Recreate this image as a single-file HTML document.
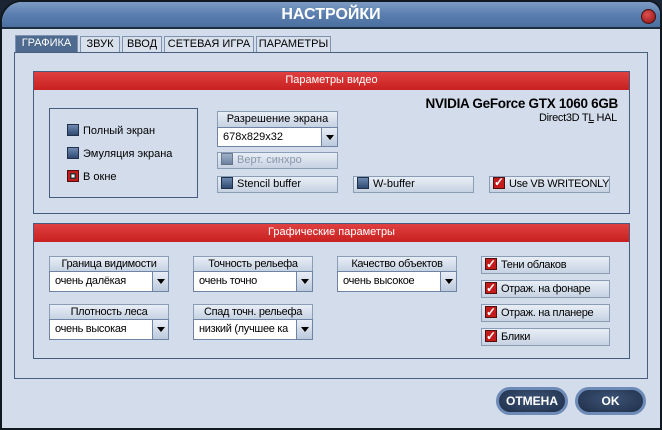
<!DOCTYPE html><html><head><meta charset="utf-8"><style>
*{margin:0;padding:0;box-sizing:border-box}
body{width:662px;height:430px;overflow:hidden;background:#1a2433;font-family:"Liberation Sans",sans-serif;font-size:11px;color:#000}
.a{position:absolute}
#win{left:0;top:0;width:662px;height:430px;background:#d3dceb;border:2px solid #101820;border-radius:22px 14px 0 0;overflow:hidden}
#tb{left:0;top:0;width:662px;height:27px;background:linear-gradient(#7d9cc4,#5a7eaf 50%,#4b6f9f);border-bottom:2px solid #1d2c40}
#title{left:0;top:4px;width:658px;text-align:center;color:#fff;font-weight:bold;font-size:16px}
.tab{top:36px;height:17px;background:#d8e0ec;border:1px solid #7f93b0;border-bottom:none;font-size:11px;text-align:center;line-height:15px}
.tab.on{background:#4e6a8e;color:#fff;top:35px;height:18px}
.panel{border:1px solid #4a5f80}
.grp{border:1px solid #465c7f;background:#d3dceb}
.hdr{left:0;top:0;right:0;height:18px;background:linear-gradient(#e04040,#c82020);color:#fff;text-align:center;line-height:17px;font-size:11px}
.btn{background:linear-gradient(#e8eef6,#c6d2e2);border:1px solid #8a9cb6;font-size:11px;line-height:15px;white-space:nowrap;overflow:hidden}
.combo{background:#fff;border:1px solid #6f84a4;line-height:18px;padding-left:5px;font-size:11px;white-space:nowrap;overflow:hidden}
.arr{position:absolute;right:0;top:0;width:16px;height:100%;background:linear-gradient(#e8eef6,#bccadd);border-left:1px solid #6f84a4}
.arr:after{content:"";position:absolute;left:4px;top:7px;border:4px solid transparent;border-top:5px solid #000}
.cb{display:inline-block;width:12px;height:12px;background:linear-gradient(#6e8ab0,#2f4a72);border:1px solid #203048;vertical-align:-2px;margin:0 4px 0 3px}
.ck{background:#c41c1c;position:relative;border-color:#501010}
.ck:after{content:"✓";position:absolute;left:0;top:-3px;color:#fff;font-size:12px;font-weight:bold}
.rb{background:#c41c1c;position:relative;border-color:#501010}
.rb:after{content:"";position:absolute;left:2px;top:2px;width:6px;height:6px;background:#fff;box-shadow:inset 0 0 0 1.5px #333}
.ob{border-radius:14px;background:radial-gradient(ellipse at 50% 40%,#3d5476,#1e2e48);border:3px solid #6d8bb6;color:#fff;font-weight:bold;font-size:12px;text-align:center;line-height:22px}
.n{letter-spacing:-0.3px}
</style></head><body>
<div id="win" class="a">
<div id="tb" class="a"><div id="title" class="a">НАСТРОЙКИ</div>
<div class="a" style="left:639px;top:7px;width:15px;height:15px;border-radius:50%;background:radial-gradient(circle at 40% 35%,#e05050,#8a1010);border:1px solid #401010"></div></div>
</div>
<div class="a tab on" style="left:15px;width:63px">ГРАФИКА</div>
<div class="a tab" style="left:80px;width:40px">ЗВУК</div>
<div class="a tab" style="left:122px;width:40px">ВВОД</div>
<div class="a tab" style="left:164px;width:90px">СЕТЕВАЯ ИГРА</div>
<div class="a tab" style="left:256px;width:75px">ПАРАМЕТРЫ</div>
<div class="a panel" style="left:14px;top:52px;width:634px;height:327px"></div>

<div class="a grp" style="left:33px;top:71px;width:597px;height:143px">
<div class="a hdr">Параметры видео</div></div>
<div class="a" style="left:49px;top:108px;width:149px;height:90px;border:1px solid #465c7f"></div>
<div class="a" style="left:64px;top:124px"><span class="cb"></span>Полный экран</div>
<div class="a" style="left:64px;top:147px"><span class="cb"></span>Эмуляция экрана</div>
<div class="a" style="left:64px;top:170px"><span class="cb rb"></span>В окне</div>
<div class="a btn" style="left:217px;top:111px;width:121px;height:17px;text-align:center">Разрешение экрана</div>
<div class="a combo" style="left:217px;top:127px;width:121px;height:20px">678x829x32<span class="arr"></span></div>
<div class="a btn" style="left:217px;top:152px;width:121px;height:17px;color:#8a96a8"><span class="cb" style="opacity:.6"></span>Верт. синхро</div>
<div class="a btn" style="left:217px;top:176px;width:121px;height:17px"><span class="cb"></span>Stencil buffer</div>
<div class="a btn" style="left:353px;top:176px;width:121px;height:17px"><span class="cb"></span>W-buffer</div>
<div class="a btn n" style="left:489px;top:176px;width:121px;height:17px"><span class="cb ck"></span>Use VB WRITEONLY</div>
<div class="a n" style="right:44px;top:96px;font-weight:bold;font-size:13.5px">NVIDIA GeForce GTX 1060 6GB</div>
<div class="a n" style="right:45px;top:112px;font-size:11px">Direct3D T<u>L</u> HAL</div>

<div class="a grp" style="left:33px;top:223px;width:597px;height:136px">
<div class="a hdr">Графические параметры</div></div>

<div class="a btn n" style="left:49px;top:256px;width:120px;height:16px;text-align:center">Граница видимости</div>
<div class="a combo n" style="left:49px;top:271px;width:120px;height:21px">очень далёкая<span class="arr"></span></div>
<div class="a btn n" style="left:193px;top:256px;width:120px;height:16px;text-align:center">Точность рельефа</div>
<div class="a combo n" style="left:193px;top:271px;width:120px;height:21px">очень точно<span class="arr"></span></div>
<div class="a btn n" style="left:337px;top:256px;width:120px;height:16px;text-align:center">Качество объектов</div>
<div class="a combo n" style="left:337px;top:271px;width:120px;height:21px">очень высокое<span class="arr"></span></div>
<div class="a btn n" style="left:49px;top:304px;width:120px;height:16px;text-align:center">Плотность леса</div>
<div class="a combo n" style="left:49px;top:319px;width:120px;height:21px">очень высокая<span class="arr"></span></div>
<div class="a btn n" style="left:193px;top:304px;width:120px;height:16px;text-align:center">Спад точн. рельефа</div>
<div class="a combo n" style="left:193px;top:319px;width:120px;height:21px">низкий (лучшее ка<span class="arr"></span></div>

<div class="a btn n" style="left:481px;top:256px;width:129px;height:18px;line-height:16px"><span class="cb ck"></span>Тени облаков</div>
<div class="a btn n" style="left:481px;top:280px;width:129px;height:18px;line-height:16px"><span class="cb ck"></span>Отраж. на фонаре</div>
<div class="a btn n" style="left:481px;top:304px;width:129px;height:18px;line-height:16px"><span class="cb ck"></span>Отраж. на планере</div>
<div class="a btn n" style="left:481px;top:328px;width:129px;height:18px;line-height:16px"><span class="cb ck"></span>Блики</div>

<div class="a ob" style="left:496px;top:387px;width:72px;height:28px">ОТМЕНА</div>
<div class="a ob" style="left:575px;top:387px;width:71px;height:28px">OK</div>
</body></html>
